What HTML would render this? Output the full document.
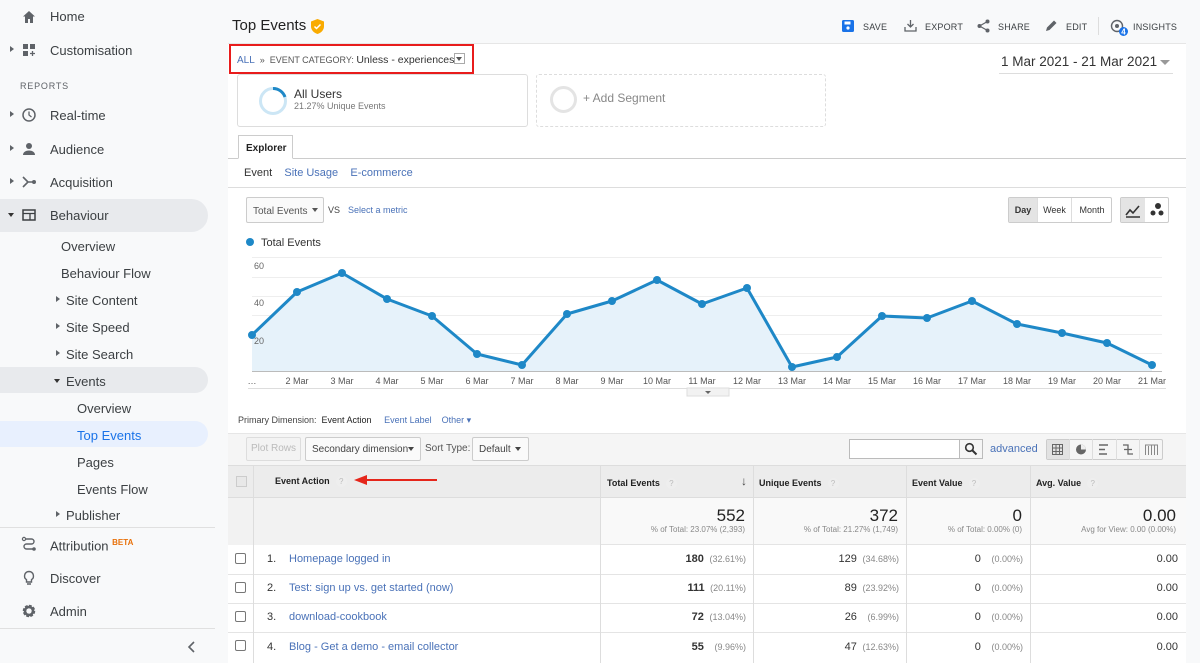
<!DOCTYPE html>
<html><head><meta charset="utf-8"><style>
*{box-sizing:border-box;margin:0;padding:0}
body{width:1200px;height:663px;overflow:hidden;background:#f8f9fa;font-family:"Liberation Sans",sans-serif;color:#333;position:relative}
.a{position:absolute}
.nav{font-size:13px;color:#3c4043;white-space:nowrap}
.ic{position:absolute;left:21px;width:16px;height:16px}
.tri{position:absolute;left:10px;width:0;height:0;border-left:4px solid #5f6368;border-top:3.5px solid transparent;border-bottom:3.5px solid transparent}
.trid{position:absolute;width:0;height:0;border-top:4px solid #333;border-left:3.5px solid transparent;border-right:3.5px solid transparent}
.bl{color:#4a72b8}
.hdr{font-size:9px;font-weight:bold;color:#222}
.q{display:inline-block;width:11px;height:11px;border-radius:50%;background:#eee;color:#bbb;font-size:8px;text-align:center;line-height:11px;vertical-align:middle;margin-left:6px;font-weight:normal}
.cb{position:absolute;left:235px;width:11px;height:11px;border:1px solid #777;border-radius:2px;background:#fff}
.btn{position:absolute;border:1px solid #ccc;border-radius:2px;background:#f5f5f5;font-size:10px;color:#444}
.act{position:absolute;top:22px;font-size:9px;color:#3c4043;letter-spacing:.2px}
</style></head><body>
<div class="a" style="left:0;top:199px;width:208px;height:33px;background:#e8eaed;border-radius:0 17px 17px 0"></div>
<div class="a" style="left:0;top:367px;width:208px;height:26px;background:#e8eaed;border-radius:0 13px 13px 0"></div>
<div class="a" style="left:0;top:421px;width:208px;height:26px;background:#e8f0fe;border-radius:0 13px 13px 0"></div>
<div class="a" style="left:0;top:527px;width:215px;height:1px;background:#e0e0e0"></div>
<div class="a" style="left:0;top:628px;width:215px;height:1px;background:#e0e0e0"></div>
<svg class="ic" style="top:9px" viewBox="0 0 16 16"><path d="M8 2L2 7.5h2V14h3v-4h2v4h3V7.5h2z" fill="#5f6368"/></svg>
<div class="a nav" style="left:50px;top:9px">Home</div>
<div class="tri" style="top:46px"></div>
<svg class="ic" style="top:42px" viewBox="0 0 16 16"><rect x="2" y="2" width="5" height="5" fill="#5f6368"/><rect x="9" y="2" width="5" height="5" fill="#5f6368"/><rect x="2" y="9" width="5" height="5" fill="#5f6368"/><path d="M11.5 9v5M9 11.5h5" stroke="#5f6368" stroke-width="1.3"/></svg>
<div class="a nav" style="left:50px;top:43px">Customisation</div>
<div class="a" style="left:20px;top:81px;font-size:9px;letter-spacing:.8px;color:#5f6368">REPORTS</div>
<div class="tri" style="top:111px"></div>
<svg class="ic" style="top:107px" viewBox="0 0 16 16"><circle cx="8" cy="8" r="6" fill="none" stroke="#5f6368" stroke-width="1.5"/><path d="M8 4.5V8l2.5 2" fill="none" stroke="#5f6368" stroke-width="1.3"/></svg>
<div class="a nav" style="left:50px;top:108px">Real-time</div>
<div class="tri" style="top:145px"></div>
<svg class="ic" style="top:141px" viewBox="0 0 16 16"><circle cx="8" cy="5" r="3" fill="#5f6368"/><path d="M2 14c0-3 3-4.5 6-4.5s6 1.5 6 4.5z" fill="#5f6368"/></svg>
<div class="a nav" style="left:50px;top:142px">Audience</div>
<div class="tri" style="top:178px"></div>
<svg class="ic" style="top:174px" viewBox="0 0 16 16"><path d="M2 3l5 5-5 5M7 8h5" fill="none" stroke="#5f6368" stroke-width="1.6"/><circle cx="13" cy="8" r="2" fill="#5f6368"/></svg>
<div class="a nav" style="left:50px;top:175px">Acquisition</div>
<div class="trid" style="left:8px;top:213px"></div>
<svg class="ic" style="top:207px" viewBox="0 0 16 16"><rect x="2" y="3" width="12" height="10" fill="none" stroke="#3c4043" stroke-width="1.5"/><path d="M2 6.5h12M9 6.5V13" stroke="#3c4043" stroke-width="1.3"/></svg>
<div class="a nav" style="left:50px;top:208px">Behaviour</div>
<div class="a nav" style="left:61px;top:239px">Overview</div>
<div class="a nav" style="left:61px;top:266px">Behaviour Flow</div>
<div class="tri" style="left:56px;top:296px"></div><div class="a nav" style="left:66px;top:293px">Site Content</div>
<div class="tri" style="left:56px;top:323px"></div><div class="a nav" style="left:66px;top:320px">Site Speed</div>
<div class="tri" style="left:56px;top:350px"></div><div class="a nav" style="left:66px;top:347px">Site Search</div>
<div class="trid" style="left:54px;top:379px"></div><div class="a nav" style="left:66px;top:374px">Events</div>
<div class="a nav" style="left:77px;top:401px">Overview</div>
<div class="a nav" style="left:77px;top:428px;color:#1a73e8">Top Events</div>
<div class="a nav" style="left:77px;top:455px">Pages</div>
<div class="a nav" style="left:77px;top:482px">Events Flow</div>
<div class="tri" style="left:56px;top:511px"></div><div class="a nav" style="left:66px;top:508px">Publisher</div>
<svg class="ic" style="top:536px" viewBox="0 0 16 16"><circle cx="3" cy="3" r="1.6" fill="none" stroke="#5f6368" stroke-width="1.2"/><path d="M4.5 3h6a2.5 2.5 0 010 5h-5a2.5 2.5 0 000 5h6" fill="none" stroke="#5f6368" stroke-width="1.4"/><circle cx="13" cy="13" r="1.8" fill="#5f6368"/></svg>
<div class="a nav" style="left:50px;top:538px">Attribution <sup style="font-size:8px;color:#e8710a;font-weight:bold">BETA</sup></div>
<svg class="ic" style="top:570px" viewBox="0 0 16 16"><path d="M8 1.5a4.5 4.5 0 00-2.5 8.2V12h5V9.7A4.5 4.5 0 008 1.5zM6 14h4" fill="none" stroke="#5f6368" stroke-width="1.4"/></svg>
<div class="a nav" style="left:50px;top:571px">Discover</div>
<svg class="ic" style="top:603px" viewBox="0 0 16 16"><circle cx="8" cy="8" r="4.5" fill="none" stroke="#5f6368" stroke-width="3.5" stroke-dasharray="2.4 1.1"/><circle cx="8" cy="8" r="4" fill="none" stroke="#5f6368" stroke-width="2.5"/></svg>
<div class="a nav" style="left:50px;top:604px">Admin</div>
<svg class="a" style="left:187px;top:640px" width="10" height="14" viewBox="0 0 10 14"><path d="M7 2L2 7l5 5" fill="none" stroke="#5f6368" stroke-width="1.6"/></svg>

<!-- header -->
<div class="a" style="left:232px;top:17px;font-size:15px;color:#222">Top Events</div>
<svg class="a" style="left:311px;top:19px" width="13" height="15" viewBox="0 0 13 15"><path d="M6.5 0L0 2.5v5C0 11 3 14 6.5 15 10 14 13 11 13 7.5v-5z" fill="#f9ab00"/><path d="M3.5 7.5l2 2 4-4" fill="none" stroke="#fff" stroke-width="1.5"/></svg>
<svg class="a" style="left:842px;top:20px" width="12" height="12" viewBox="0 0 12 12"><rect width="12" height="12" rx="1.5" fill="#1a73e8"/><rect x="2.5" y="1.5" width="6" height="3" fill="#fff"/><circle cx="6" cy="8" r="1.6" fill="#fff"/></svg>
<div class="act" style="left:863px">SAVE</div>
<svg class="a" style="left:904px;top:19px" width="13" height="13" viewBox="0 0 13 13"><path d="M6.5 1v7M3.5 5l3 3 3-3M1 8v4h11V8" fill="none" stroke="#5f6368" stroke-width="1.3"/></svg>
<div class="act" style="left:925px">EXPORT</div>
<svg class="a" style="left:977px;top:19px" width="13" height="14" viewBox="0 0 13 14"><circle cx="10.5" cy="2.5" r="2" fill="#5f6368"/><circle cx="2.5" cy="7" r="2" fill="#5f6368"/><circle cx="10.5" cy="11.5" r="2" fill="#5f6368"/><path d="M10.5 2.5L2.5 7l8 4.5" fill="none" stroke="#5f6368" stroke-width="1.2"/></svg>
<div class="act" style="left:998px">SHARE</div>
<svg class="a" style="left:1045px;top:19px" width="13" height="13" viewBox="0 0 13 13"><path d="M1 12l1-3.5L9 1.5l2.5 2.5L4.5 11z" fill="#5f6368"/></svg>
<div class="act" style="left:1066px">EDIT</div>
<div class="a" style="left:1098px;top:17px;width:1px;height:18px;background:#ddd"></div>
<svg class="a" style="left:1110px;top:19px" width="20" height="18" viewBox="0 0 20 18"><circle cx="7" cy="7" r="5.5" fill="none" stroke="#5f6368" stroke-width="1.4"/><circle cx="7" cy="7" r="2" fill="#5f6368"/><circle cx="13.5" cy="12.5" r="4.5" fill="#1a73e8"/><text x="13.5" y="15.5" font-size="8" font-weight="bold" fill="#fff" text-anchor="middle" font-family="Liberation Sans">4</text></svg>
<div class="act" style="left:1133px">INSIGHTS</div>

<!-- main white -->
<div class="a" style="left:228px;top:43px;width:958px;height:620px;background:#fff;border-top:1px solid #e6e6e6"></div>
<div class="a" style="left:229px;top:44px;width:245px;height:30px;border:2px solid #e81c1c"></div>
<div class="a" style="left:237px;top:54px;font-size:9px;color:#555;white-space:nowrap"><span class="bl" style="font-size:10px">ALL</span> &nbsp;» &nbsp;EVENT CATEGORY: <span style="font-size:10.5px;color:#333">Unless - experiences</span></div>
<div class="a" style="left:454px;top:53px;width:11px;height:11px;border:1px solid #aaa;background:#fff"></div><div class="trid" style="left:456px;top:57px;border-top-color:#555"></div>
<div class="a" style="left:1001px;top:54px;font-size:13.5px;color:#333">1 Mar 2021 - 21 Mar 2021</div>
<div class="trid" style="left:1160px;top:60px;border-top:5px solid #999;border-left-width:5px;border-right-width:5px"></div>
<div class="a" style="left:999px;top:73px;width:174px;height:1px;background:#ddd"></div>

<div class="a" style="left:237px;top:74px;width:291px;height:53px;border:1px solid #ddd;border-radius:3px"></div>
<svg class="a" style="left:257px;top:85px" width="32" height="32" viewBox="0 0 32 32"><circle cx="16" cy="16" r="12.5" fill="none" stroke="#cce6f5" stroke-width="3"/><path d="M16 3.5A12.5 12.5 0 0128 12" fill="none" stroke="#1e88c7" stroke-width="3"/></svg>
<div class="a" style="left:294px;top:87px;font-size:12px;color:#333">All Users</div>
<div class="a" style="left:294px;top:101px;font-size:9px;color:#777">21.27% Unique Events</div>
<div class="a" style="left:536px;top:74px;width:290px;height:53px;border:1px dashed #ddd;border-radius:3px"></div>
<div class="a" style="left:550px;top:86px;width:27px;height:27px;border:3px solid #e4e4e4;border-radius:50%"></div>
<div class="a" style="left:583px;top:91px;font-size:12px;color:#888">+ Add Segment</div>

<div class="a" style="left:228px;top:158px;width:958px;height:1px;background:#ccc"></div>
<div class="a" style="left:238px;top:135px;width:55px;height:24px;border:1px solid #ccc;border-bottom:1px solid #fff;background:#fff;font-size:10px;font-weight:bold;color:#222;padding:7px 0 0 7px">Explorer</div>
<div class="a" style="left:244px;top:167px;font-size:11px;color:#333;white-space:nowrap">Event &nbsp; <span class="bl">&nbsp;Site Usage</span> &nbsp; <span class="bl">&nbsp;E-commerce</span></div>
<div class="a" style="left:228px;top:187px;width:958px;height:1px;background:#ddd"></div>

<div class="btn" style="left:246px;top:197px;width:78px;height:26px;padding:8px 0 0 6px;color:#555;background:#fafafa">Total Events</div><div class="trid" style="left:312px;top:208px;border-top-color:#555"></div>
<div class="a" style="left:328px;top:205px;font-size:9px;color:#444">VS</div>
<div class="a" style="left:348px;top:205px;font-size:9px"><span class="bl">Select a metric</span></div>

<div class="btn" style="left:1008px;top:197px;width:104px;height:26px;background:#fff"></div>
<div class="a" style="left:1009px;top:198px;width:28px;height:24px;background:#e4e4e4;font-size:9px;font-weight:bold;text-align:center;line-height:24px;color:#333">Day</div>
<div class="a" style="left:1037px;top:198px;width:35px;height:24px;border-left:1px solid #ddd;border-right:1px solid #ddd;font-size:9px;text-align:center;line-height:24px;color:#333">Week</div>
<div class="a" style="left:1072px;top:198px;width:40px;height:24px;font-size:9px;text-align:center;line-height:24px;color:#333">Month</div>
<div class="btn" style="left:1120px;top:197px;width:49px;height:26px;background:#fff"></div>
<div class="a" style="left:1121px;top:198px;width:24px;height:24px;background:#e4e4e4"></div>
<svg class="a" style="left:1125px;top:202px" width="16" height="16" viewBox="0 0 16 16"><path d="M1 13l4-5 3 3 6-7" fill="none" stroke="#333" stroke-width="1.6"/><path d="M1 15h14" stroke="#333" stroke-width="1.5"/></svg>
<svg class="a" style="left:1149px;top:202px" width="16" height="16" viewBox="0 0 16 16"><circle cx="9" cy="4" r="3" fill="#333"/><circle cx="4" cy="11" r="2.5" fill="#333"/><circle cx="12" cy="11" r="2.5" fill="#333"/></svg>

<div class="a" style="left:246px;top:238px;width:8px;height:8px;border-radius:50%;background:#1e88c7"></div>
<div class="a" style="left:261px;top:237px;font-size:11px;color:#333">Total Events</div>
<svg class="a" style="left:228px;top:250px" width="958" height="150" viewBox="228 250 958 150">
<g stroke="#eee" stroke-width="1"><path d="M252 257.5H1162M252 277.5H1162M252 296.5H1162M252 315.5H1162M252 334.5H1162M252 353.5H1162"/></g>
<polygon fill="#e6f2fa" points="252,371 252,335 297,292 342,273 387,299 432,316 477,354 522,365 567,314 612,301 657,280 702,304 747,288 792,367 837,357 882,316 927,318 972,301 1017,324 1062,333 1107,343 1152,365 1152,371"/>
<path d="M252 371.5H1162" stroke="#bbb"/>
<polyline fill="none" stroke="#1e88c7" stroke-width="3" stroke-linejoin="round" points="252,335 297,292 342,273 387,299 432,316 477,354 522,365 567,314 612,301 657,280 702,304 747,288 792,367 837,357 882,316 927,318 972,301 1017,324 1062,333 1107,343 1152,365"/>
<g fill="#1e88c7"><circle cx="252" cy="335" r="4"/><circle cx="297" cy="292" r="4"/><circle cx="342" cy="273" r="4"/><circle cx="387" cy="299" r="4"/><circle cx="432" cy="316" r="4"/><circle cx="477" cy="354" r="4"/><circle cx="522" cy="365" r="4"/><circle cx="567" cy="314" r="4"/><circle cx="612" cy="301" r="4"/><circle cx="657" cy="280" r="4"/><circle cx="702" cy="304" r="4"/><circle cx="747" cy="288" r="4"/><circle cx="792" cy="367" r="4"/><circle cx="837" cy="357" r="4"/><circle cx="882" cy="316" r="4"/><circle cx="927" cy="318" r="4"/><circle cx="972" cy="301" r="4"/><circle cx="1017" cy="324" r="4"/><circle cx="1062" cy="333" r="4"/><circle cx="1107" cy="343" r="4"/><circle cx="1152" cy="365" r="4"/></g>
<g font-family="Liberation Sans" font-size="9" fill="#666"><text x="254" y="269">60</text><text x="254" y="306">40</text><text x="254" y="344">20</text></g>
<g font-family="Liberation Sans" font-size="9" fill="#555" text-anchor="middle"><text x="252" y="384">…</text><text x="297" y="384">2 Mar</text><text x="342" y="384">3 Mar</text><text x="387" y="384">4 Mar</text><text x="432" y="384">5 Mar</text><text x="477" y="384">6 Mar</text><text x="522" y="384">7 Mar</text><text x="567" y="384">8 Mar</text><text x="612" y="384">9 Mar</text><text x="657" y="384">10 Mar</text><text x="702" y="384">11 Mar</text><text x="747" y="384">12 Mar</text><text x="792" y="384">13 Mar</text><text x="837" y="384">14 Mar</text><text x="882" y="384">15 Mar</text><text x="927" y="384">16 Mar</text><text x="972" y="384">17 Mar</text><text x="1017" y="384">18 Mar</text><text x="1062" y="384">19 Mar</text><text x="1107" y="384">20 Mar</text><text x="1152" y="384">21 Mar</text></g>
<path d="M248 388.5H1166" stroke="#ddd"/>
<rect x="687" y="388" width="42" height="8" fill="#f2f2f2" stroke="#ddd"/><path d="M705 391l3 3 3-3z" fill="#666"/>
</svg>

<div class="a" style="left:238px;top:415px;font-size:9px;color:#444;white-space:nowrap">Primary Dimension: &nbsp;<span style="color:#222">Event Action</span> &nbsp; &nbsp; <span class="bl">Event Label</span> &nbsp; &nbsp;<span class="bl">Other ▾</span></div>
<div class="a" style="left:228px;top:433px;width:958px;height:32px;background:#f5f5f5;border-top:1px solid #e6e6e6"></div>
<div class="btn" style="left:246px;top:437px;width:55px;height:24px;color:#bbb;text-align:center;line-height:22px;background:#f3f3f3;border-color:#ddd">Plot Rows</div>
<div class="btn" style="left:305px;top:437px;width:116px;height:24px;padding:6px 0 0 6px;background:#fafafa;white-space:nowrap">Secondary dimension</div><div class="trid" style="left:408px;top:447px;border-top-color:#444"></div>
<div class="a" style="left:425px;top:443px;font-size:10px;color:#555">Sort Type:</div>
<div class="btn" style="left:472px;top:437px;width:57px;height:24px;padding:6px 0 0 6px;background:#fafafa">Default</div><div class="trid" style="left:515px;top:447px;border-top-color:#444"></div>
<div class="a" style="left:849px;top:439px;width:134px;height:20px;border:1px solid #bbb;background:#fff"></div>
<div class="a" style="left:959px;top:439px;width:24px;height:20px;border-left:1px solid #ccc;background:#f5f5f5;border:1px solid #bbb"></div>
<svg class="a" style="left:964px;top:442px" width="14" height="14" viewBox="0 0 14 14"><circle cx="5.5" cy="5.5" r="3.8" fill="none" stroke="#333" stroke-width="1.6"/><path d="M8.5 8.5l4 4" stroke="#333" stroke-width="2"/></svg>
<div class="a" style="left:990px;top:443px;font-size:11px"><span class="bl">advanced</span></div>
<div class="btn" style="left:1046px;top:439px;width:117px;height:21px;background:#f5f5f5"></div>
<div class="a" style="left:1047px;top:440px;width:23px;height:19px;background:#e2e2e2"></div>
<svg class="a" style="left:1046px;top:439px" width="117" height="21" viewBox="0 0 117 21">
<g stroke="#ddd"><path d="M23.5 0V21M46.5 0V21M70.5 0V21M93.5 0V21"/></g>
<g fill="none" stroke="#666" stroke-width="1"><rect x="6.5" y="5.5" width="10" height="10"/><path d="M6.5 9h10M6.5 12.5h10M10 5.5v10M13.5 5.5v10"/></g>
<circle cx="35" cy="10.5" r="5" fill="#666"/><path d="M35 10.5V5.5A5 5 0 0140 10.5z" fill="#eee"/>
<g stroke="#666" stroke-width="1.6"><path d="M53 6h9M53 10.5h6M53 15h8"/></g>
<g stroke="#666" stroke-width="1.3" fill="none"><path d="M77 6h5v9h5M78 10.5h8"/></g>
<g stroke="#888" stroke-width="1"><path d="M99.5 6v10M102.5 7v9M105.5 6v10M108.5 6v10M111.5 6v10M99 6h13"/></g>
</svg>

<div class="a" style="left:228px;top:465px;width:958px;height:33px;background:#ececec;border-top:1px solid #ddd;border-bottom:1px solid #ddd"></div>
<div class="a" style="left:228px;top:498px;width:958px;height:47px;background:#f9f9f9;border-bottom:1px solid #e4e4e4"></div>
<div class="a" style="left:228px;top:498px;width:372px;height:47px;background:#f2f2f2"></div>
<div class="a" style="left:228px;top:574px;width:958px;height:1px;background:#e4e4e4"></div>
<div class="a" style="left:228px;top:603px;width:958px;height:1px;background:#e4e4e4"></div>
<div class="a" style="left:228px;top:632px;width:958px;height:1px;background:#e4e4e4"></div>
<div class="a" style="left:253px;top:465px;width:1px;height:198px;background:#ddd"></div>
<div class="a" style="left:600px;top:465px;width:1px;height:198px;background:#ddd"></div>
<div class="a" style="left:753px;top:465px;width:1px;height:198px;background:#ddd"></div>
<div class="a" style="left:906px;top:465px;width:1px;height:198px;background:#ddd"></div>
<div class="a" style="left:1030px;top:465px;width:1px;height:198px;background:#ddd"></div>
<div class="a" style="left:236px;top:476px;width:11px;height:11px;border:1px solid #ccc;background:#e8e8e8"></div>
<div class="a hdr" style="left:275px;top:476px">Event Action<span class="q">?</span></div>
<svg class="a" style="left:354px;top:474px" width="84" height="12" viewBox="0 0 84 12"><path d="M12 6H83" stroke="#e5261b" stroke-width="2"/><path d="M0 6l13-5v10z" fill="#e5261b"/></svg>
<div class="a hdr" style="left:607px;top:478px">Total Events<span class="q">?</span></div>
<div class="a" style="left:741px;top:474px;font-size:12px;color:#444">↓</div>
<div class="a hdr" style="left:759px;top:478px">Unique Events<span class="q">?</span></div>
<div class="a hdr" style="left:912px;top:478px">Event Value<span class="q">?</span></div>
<div class="a hdr" style="left:1036px;top:478px">Avg. Value<span class="q">?</span></div>

<div class="a" style="left:600px;top:506px;width:145px;text-align:right;font-size:17px;color:#222">552</div>
<div class="a" style="left:600px;top:525px;width:145px;text-align:right;font-size:8px;color:#888">% of Total: 23.07% (2,393)</div>
<div class="a" style="left:753px;top:506px;width:145px;text-align:right;font-size:17px;color:#222">372</div>
<div class="a" style="left:753px;top:525px;width:145px;text-align:right;font-size:8px;color:#888">% of Total: 21.27% (1,749)</div>
<div class="a" style="left:906px;top:506px;width:116px;text-align:right;font-size:17px;color:#222">0</div>
<div class="a" style="left:906px;top:525px;width:116px;text-align:right;font-size:8px;color:#888">% of Total: 0.00% (0)</div>
<div class="a" style="left:1030px;top:506px;width:146px;text-align:right;font-size:17px;color:#222">0.00</div>
<div class="a" style="left:1030px;top:525px;width:146px;text-align:right;font-size:8px;color:#888">Avg for View: 0.00 (0.00%)</div>

<div class="cb" style="top:553px"></div><div class="cb" style="top:582px"></div><div class="cb" style="top:611px"></div><div class="cb" style="top:640px"></div>
<div class="a" style="left:267px;top:553px;font-size:11px;color:#333">1.</div><div class="a" style="left:289px;top:553px;font-size:11px"><span class="bl">Homepage logged in</span></div>
<div class="a" style="left:267px;top:582px;font-size:11px;color:#333">2.</div><div class="a" style="left:289px;top:582px;font-size:11px"><span class="bl">Test: sign up vs. get started (now)</span></div>
<div class="a" style="left:267px;top:611px;font-size:11px;color:#333">3.</div><div class="a" style="left:289px;top:611px;font-size:11px"><span class="bl">download-cookbook</span></div>
<div class="a" style="left:267px;top:641px;font-size:11px;color:#333">4.</div><div class="a" style="left:289px;top:641px;font-size:11px"><span class="bl">Blog - Get a demo - email collector</span></div>

<div class="a" style="left:600px;top:553px;width:146px;text-align:right;font-size:11px;white-space:nowrap"><b>180</b> <span style="font-size:9px;color:#888">&nbsp;(32.61%)</span></div>
<div class="a" style="left:600px;top:582px;width:146px;text-align:right;font-size:11px;white-space:nowrap"><b>111</b> <span style="font-size:9px;color:#888">&nbsp;(20.11%)</span></div>
<div class="a" style="left:600px;top:611px;width:146px;text-align:right;font-size:11px;white-space:nowrap"><b>72</b> <span style="font-size:9px;color:#888">&nbsp;(13.04%)</span></div>
<div class="a" style="left:600px;top:641px;width:146px;text-align:right;font-size:11px;white-space:nowrap"><b>55</b> <span style="font-size:9px;color:#888">&nbsp;&nbsp;&nbsp;(9.96%)</span></div>

<div class="a" style="left:753px;top:553px;width:146px;text-align:right;font-size:11px;white-space:nowrap">129 <span style="font-size:9px;color:#888">&nbsp;(34.68%)</span></div>
<div class="a" style="left:753px;top:582px;width:146px;text-align:right;font-size:11px;white-space:nowrap">89 <span style="font-size:9px;color:#888">&nbsp;(23.92%)</span></div>
<div class="a" style="left:753px;top:611px;width:146px;text-align:right;font-size:11px;white-space:nowrap">26 <span style="font-size:9px;color:#888">&nbsp;&nbsp;&nbsp;(6.99%)</span></div>
<div class="a" style="left:753px;top:641px;width:146px;text-align:right;font-size:11px;white-space:nowrap">47 <span style="font-size:9px;color:#888">&nbsp;(12.63%)</span></div>

<div class="a" style="left:906px;top:553px;width:117px;text-align:right;font-size:11px;white-space:nowrap">0 <span style="font-size:9px;color:#888">&nbsp;&nbsp;&nbsp;(0.00%)</span></div>
<div class="a" style="left:906px;top:582px;width:117px;text-align:right;font-size:11px;white-space:nowrap">0 <span style="font-size:9px;color:#888">&nbsp;&nbsp;&nbsp;(0.00%)</span></div>
<div class="a" style="left:906px;top:611px;width:117px;text-align:right;font-size:11px;white-space:nowrap">0 <span style="font-size:9px;color:#888">&nbsp;&nbsp;&nbsp;(0.00%)</span></div>
<div class="a" style="left:906px;top:641px;width:117px;text-align:right;font-size:11px;white-space:nowrap">0 <span style="font-size:9px;color:#888">&nbsp;&nbsp;&nbsp;(0.00%)</span></div>

<div class="a" style="left:1030px;top:553px;width:148px;text-align:right;font-size:11px">0.00</div>
<div class="a" style="left:1030px;top:582px;width:148px;text-align:right;font-size:11px">0.00</div>
<div class="a" style="left:1030px;top:611px;width:148px;text-align:right;font-size:11px">0.00</div>
<div class="a" style="left:1030px;top:641px;width:148px;text-align:right;font-size:11px">0.00</div>
</body></html>
